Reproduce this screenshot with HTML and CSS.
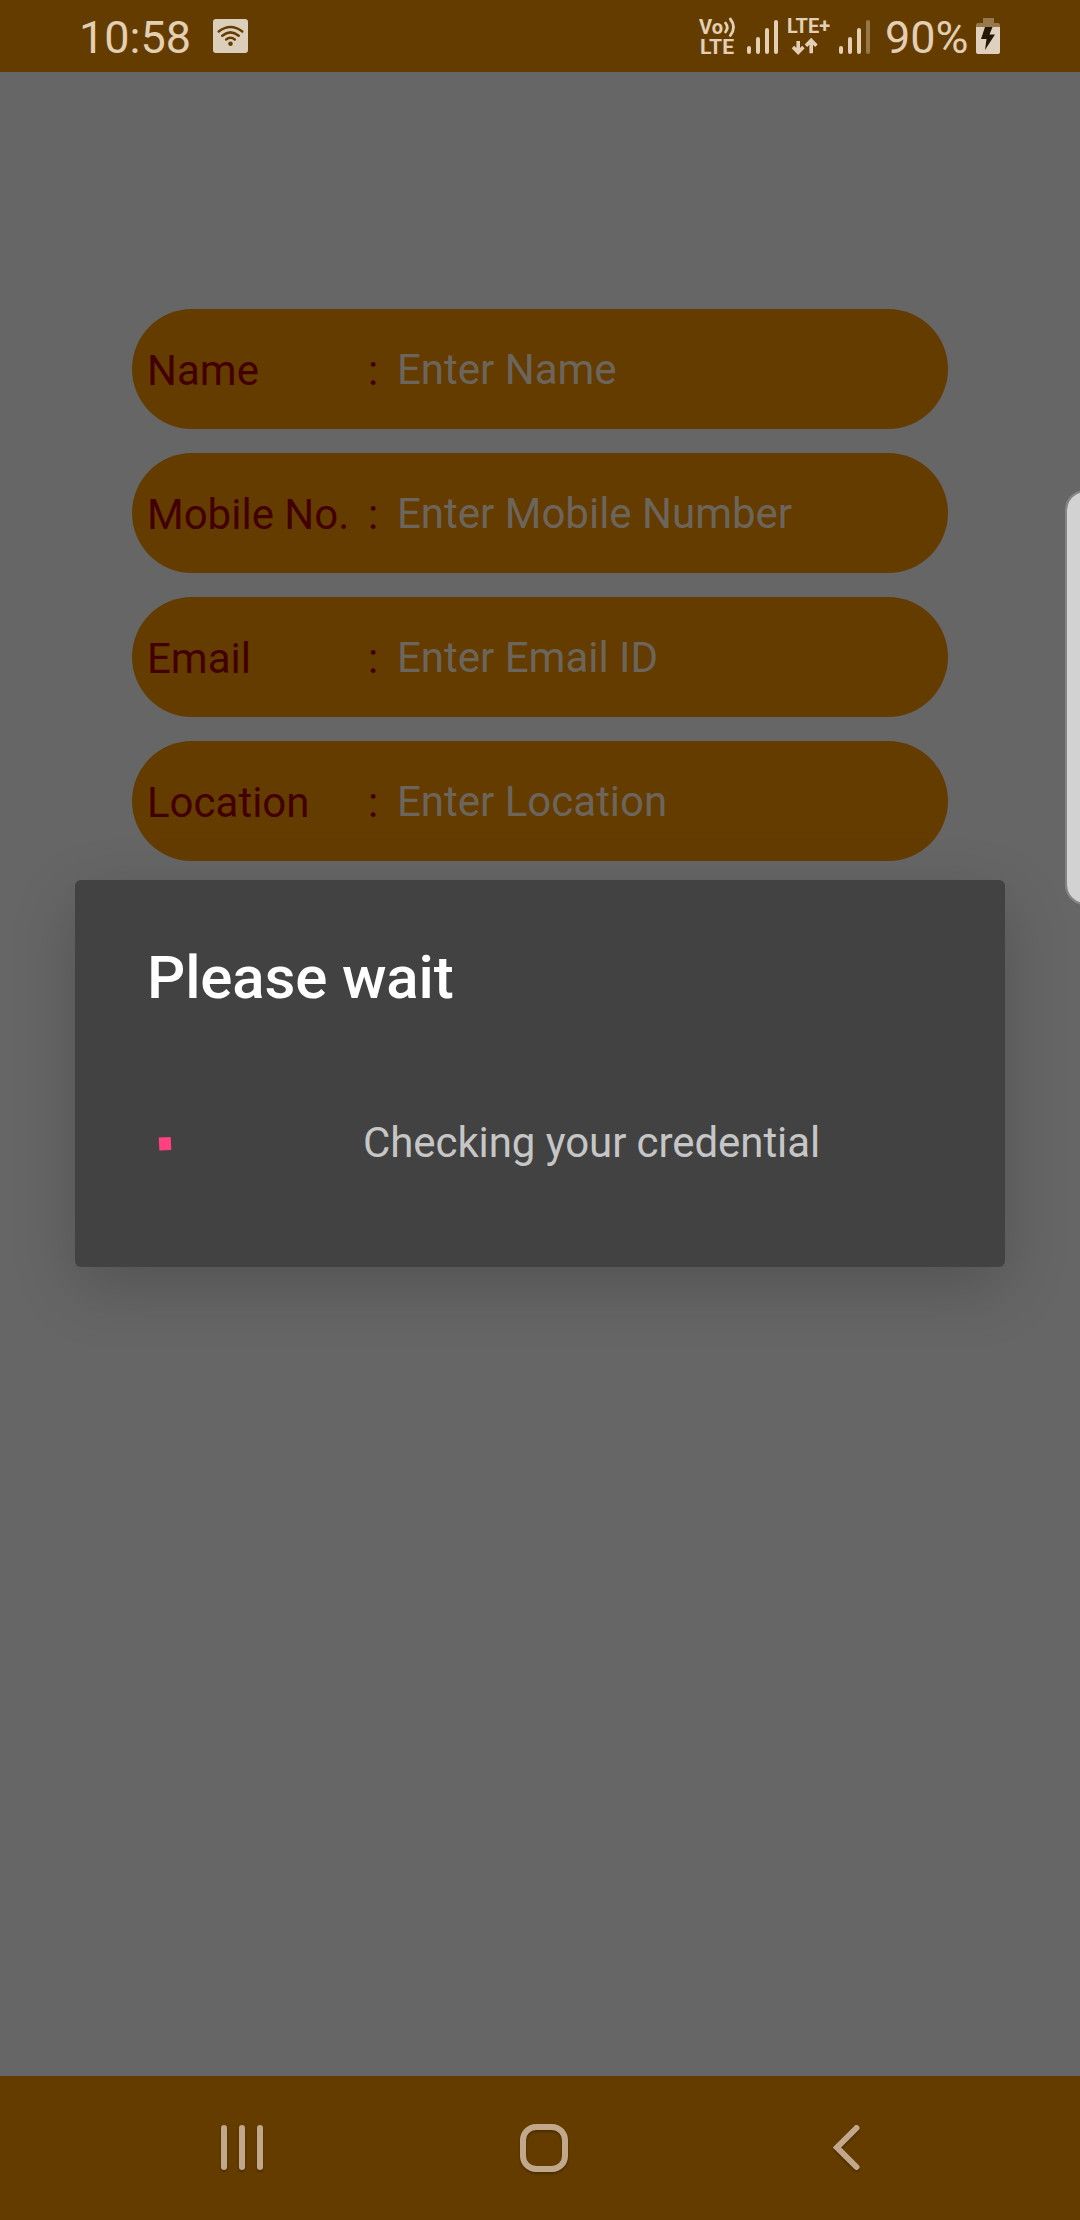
FILE: index.html
```html
<!DOCTYPE html>
<html lang="en">
<head>
<meta charset="utf-8">
<title>Register</title>
<link rel="stylesheet" href="styles.css">
</head>
<body>
<div class="screen">
  <header class="status">
    <span class="clock">10:58</span>
    <svg class="wifi" width="35" height="34" viewBox="0 0 35 34">
      <rect width="35" height="34" rx="3" fill="#dbcebb"/>
      <g fill="none" stroke="#643c00" stroke-width="2.5" stroke-linecap="round">
        <path d="M5.700 12.400q11.800-8.800 23.600 0"/>
        <path d="M9.300 16.700q8.200-6.600 16.400 0"/>
        <path d="M13.200 20.500q4.300-3.600 8.600 0"/>
      </g>
      <circle cx="17.500" cy="24.800" r="2.300" fill="#643c00"/>
    </svg>
    <svg class="volte" width="44" height="46" viewBox="-2 -4 44 46">
      <text x="0" y="17.500" textLength="24" lengthAdjust="spacingAndGlyphs">Vo</text>
      <text x="1" y="38" textLength="34" lengthAdjust="spacingAndGlyphs">LTE</text>
      <g fill="none" stroke="#e2cfb4" stroke-width="2.800" stroke-linecap="round">
        <path d="M26.500 7q3.500 4.500 0 9"/>
        <path d="M31.300 3q6.500 8 0 16.500"/>
      </g>
    </svg>
    <svg class="signal" width="31" height="34" viewBox="0 0 31 34">
      <g fill="#e2cfb4">
        <rect x="0" y="26" width="4" height="8" rx="2"/><rect x="9" y="17" width="4" height="17" rx="2"/>
        <rect x="18" y="8" width="4" height="26" rx="2"/><rect x="27" y="0" width="4" height="34" rx="2"/>
      </g>
    </svg>
    <svg class="lte" width="48" height="46" viewBox="-2 -4 48 46">
      <text x="0" y="17" textLength="43" lengthAdjust="spacingAndGlyphs">LTE+</text>
      <path d="M11.200 25v11M6 31l5.200 5.400L16.400 31M24.200 37.300V25M19 29.700l5.200-5.400 5.200 5.400" fill="none" stroke="#e2cfb4" stroke-width="3.600"/>
    </svg>
    <svg class="signal2" width="31" height="34" viewBox="0 0 31 34">
      <g fill="#e2cfb4">
        <rect x="0" y="26" width="4" height="8" rx="2"/><rect x="9" y="17" width="4" height="17" rx="2"/>
        <rect x="18" y="8" width="4" height="26" rx="2"/><rect x="27" y="0" width="4" height="34" rx="2" opacity=".4"/>
      </g>
    </svg>
    <span class="percent">90%</span>
    <svg class="battery" width="24" height="36" viewBox="0 0 24 36">
      <path d="M7 0h11v5h4a2 2 0 0 1 2 2v2H0V7a2 2 0 0 1 2-2h5z" fill="#97784a"/>
      <path d="M0 9h24v25a2 2 0 0 1-2 2H2a2 2 0 0 1-2-2z" fill="#dfd1bd"/>
      <path d="M9 9h7.500l-3 7.500H19L9 32l1.500-11H5z" fill="#241704"/>
    </svg>
  </header>

  <main class="content">
    <form class="form">
      <div class="field"><span class="label">Name</span><span class="colon">:</span><span class="hint">Enter Name</span></div>
      <div class="field"><span class="label">Mobile No.</span><span class="colon">:</span><span class="hint">Enter Mobile Number</span></div>
      <div class="field"><span class="label">Email</span><span class="colon">:</span><span class="hint">Enter Email ID</span></div>
      <div class="field"><span class="label">Location</span><span class="colon">:</span><span class="hint">Enter Location</span></div>
    </form>
  </main>

  <nav class="navbar">
    <svg class="recents" width="42" height="46" viewBox="0 0 42 46">
      <rect x="0" y="0" width="6" height="45" rx="3"/><rect x="18" y="0" width="6" height="45" rx="3"/><rect x="36" y="0" width="6" height="45" rx="3"/>
    </svg>
    <svg class="home" width="48" height="48" viewBox="0 0 48 48">
      <rect x="3" y="3" width="42" height="42" rx="13" fill="none" stroke="#c1a88a" stroke-width="6"/>
    </svg>
    <svg class="back" width="28" height="46" viewBox="0 0 28 46">
      <path d="M23.500 3L4 22.500 23.500 42" fill="none" stroke="#c1a88a" stroke-width="6" stroke-linecap="round"/>
    </svg>
  </nav>

  <div class="handle"></div>
  <section class="dialog">
    <h1 class="title">Please wait</h1>
    <div class="progress">
      <svg class="spinner" width="144" height="144" viewBox="0 0 144 144">
        <rect x="12" y="66.300" width="12" height="13" fill="#ff4081" transform="rotate(-3 18 72.800)"/>
      </svg>
      <p class="message">Checking your credential</p>
    </div>
  </section>
</div>
</body>
</html>
```
FILE: styles.css
```css
* { box-sizing: border-box; }
body { margin: 0; font-family: Roboto, sans-serif; }
.screen {
  position: relative;
  display: flex;
  flex-direction: column;
  width: 1080px;
  height: 2220px;
  overflow: hidden;
  background: #666;
}
.status {
  display: flex;
  align-items: flex-start;
  flex: none;
  height: 72px;
  padding: 0 79px;
  background: #643c00;
  color: #e2cfb4;
  font-size: 45px;
  line-height: 75px;
  white-space: nowrap;
}
.status svg { flex: none; }
.clock { width: 134px; }
.wifi { margin-top: 19px; }
.volte { margin: 12px 0 0 449px; }
.volte text, .lte text { font: 700 20.500px/1 Roboto, sans-serif; fill: #e2cfb4; }
.signal { margin: 20px 0 0 6px; }
.lte { margin: 12px 0 0 7px; }
.signal2 { margin: 20px 0 0 6px; }
.percent { width: 91px; margin-left: 15px; }
.battery { margin-top: 18px; }

.content { flex: 1; padding: 237px 132px 0; }
.form { display: flex; flex-direction: column; gap: 24px; }
.field {
  display: flex;
  height: 120px;
  padding-left: 15px;
  border-radius: 60px;
  background: #643c00;
  font-size: 42px;
  white-space: nowrap;
}
.label, .colon { color: #420000; line-height: 123px; }
.label { width: 221px; }
.colon { width: 29px; }
.hint { color: #6c655c; line-height: 121px; }

.navbar {
  display: flex;
  align-items: flex-start;
  flex: none;
  height: 144px;
  padding: 48px 0 0 221px;
  background: #643c00;
}
.navbar svg { filter: drop-shadow(0 2px 1px rgba(0, 0, 0, .25)); }
.recents { margin-top: 1px; fill: #c1a88a; }
.home { margin-left: 257px; }
.back { margin: 1px 0 0 265px; }

.dialog {
  position: absolute;
  left: 75px;
  top: 880px;
  width: 930px;
  height: 387px;
  padding: 0 72px;
  border-radius: 6px;
  background: #424242;
  box-shadow: 0 20px 64px rgba(0, 0, 0, .19);
}
.title {
  margin: 56px 0 0;
  color: #fff;
  font-size: 60px;
  font-weight: 500;
  letter-spacing: -.15px;
  line-height: 84px;
}
.progress { display: flex; align-items: center; margin-top: 51px; }
.message {
  margin: 0 0 0 72px;
  color: #c6c6c6;
  font-size: 42px;
  letter-spacing: -.08px;
  line-height: 50px;
  white-space: nowrap;
}
.handle {
  position: absolute;
  left: 1065px;
  top: 490px;
  width: 40px;
  height: 415px;
  border: 2px solid #858585;
  border-radius: 22px;
  background: #d2d2d2;
  background-clip: padding-box;
}
```
